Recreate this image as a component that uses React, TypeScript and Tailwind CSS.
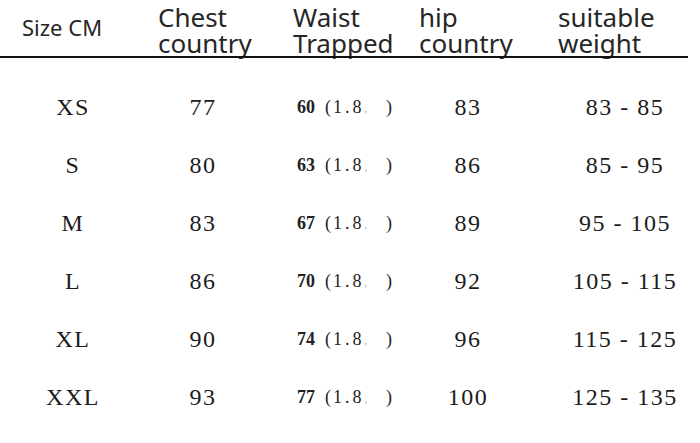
const rows = [
  { size: "XS", chest: "77", waist: "60", hip: "83", weight: "83 - 85" },
  { size: "S", chest: "80", waist: "63", hip: "86", weight: "85 - 95" },
  { size: "M", chest: "83", waist: "67", hip: "89", weight: "95 - 105" },
  { size: "L", chest: "86", waist: "70", hip: "92", weight: "105 - 115" },
  { size: "XL", chest: "90", waist: "74", hip: "96", weight: "115 - 125" },
  { size: "XXL", chest: "93", waist: "77", hip: "100", weight: "125 - 135" },
];

const sans = { fontFamily: '"Noto Sans", "Open Sans", sans-serif' };
const serif = { fontFamily: '"Liberation Serif", "Times New Roman", serif' };

export default function App() {
  return (
    <div className="w-[700px] h-[443px] bg-white overflow-hidden text-[#1c1c1c]">
      {/* header */}
      <div className="relative h-[58px]" style={sans}>
        <div className="flex items-start pt-[4px] text-[26px] leading-[26px] text-[#262626]">
          <div className="w-[158px] shrink-0 pl-[22px] pt-[10px] text-[22px] leading-[26px]">Size CM</div>
          <div className="w-[135px] shrink-0">
            Chest
            <br />
            country
          </div>
          <div className="w-[126px] shrink-0">
            Waist
            <br />
            Trapped
          </div>
          <div className="w-[139px] shrink-0">
            hip
            <br />
            country
          </div>
          <div className="shrink-0">
            suitable
            <br />
            weight
          </div>
        </div>
        <div className="absolute left-0 top-[56px] w-[688px] h-[2px] bg-[#111]" />
      </div>

      {/* rows */}
      <div className="pt-[20px]" style={serif}>
        {rows.map((r) => (
          <div key={r.size} className="flex items-center h-[58px] text-[24px] tracking-[1.5px]">
            <div className="w-[146px] shrink-0 text-center">{r.size}</div>
            <div className="w-[114px] shrink-0 text-center">{r.chest}</div>
            <div className="w-[172px] shrink-0 flex items-center pl-[37px] text-[18px] tracking-normal text-[#222]">
              <span className="font-bold">{r.waist}</span>
              <span className="ml-[10px]">(</span>
              <span className="ml-[2px] tracking-[3px]">1.8</span>
              <span className="text-[10px] text-[#999] self-end mb-[5px]">,</span>
              <span className="ml-[19px]">)</span>
            </div>
            <div className="w-[72px] shrink-0 text-center">{r.hip}</div>
            <div className="w-[242px] shrink-0 text-center whitespace-pre">{r.weight}</div>
          </div>
        ))}
      </div>
    </div>
  );
}
